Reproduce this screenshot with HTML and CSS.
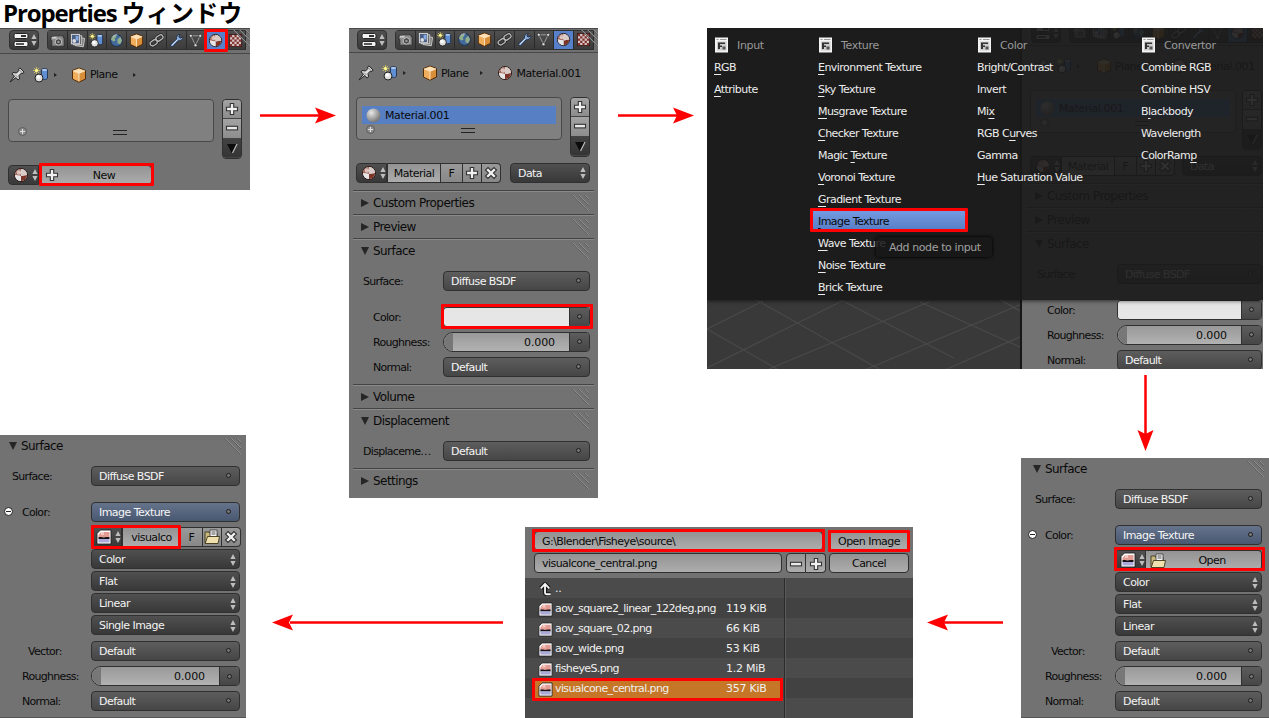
FILE: index.html
```html
<!DOCTYPE html>
<html lang="ja">
<head>
  <meta charset="UTF-8" />
  <title>Properties ウィンドウ</title>
  <link rel="stylesheet" href="styles.css">
</head>
<body>
  <!-- icon set -->
  <svg class="defs" width="0" height="0">
    <defs>
      <radialGradient id="ball" cx="35%" cy="30%" r="75%">
        <stop offset="0" stop-color="#e8e8e8"/><stop offset="1" stop-color="#707070"/>
      </radialGradient>
    </defs>
    <symbol id="i-editor" viewBox="0 0 16 16">
      <rect x="1" y="1.500" width="14" height="5" rx="1.500" fill="#f2f2f2" stroke="#222"/>
      <rect x="8" y="3" width="5" height="2" fill="#333"/>
      <rect x="1" y="9.500" width="14" height="5" rx="1.500" fill="#f2f2f2" stroke="#222"/>
      <rect x="3" y="11" width="8" height="2" fill="#555"/>
    </symbol>
    <symbol id="i-camera" viewBox="0 0 16 16">
      <path d="M1 4h3l1-1h9v2h1v9H2V8H1z" fill="#8d8d8d" stroke="#222" stroke-width=".7"/>
      <path d="M2 4h5v2H2z" fill="#ccc"/>
      <circle cx="9" cy="9.500" r="3.400" fill="#444" stroke="#c8c8c8"/>
      <circle cx="9" cy="9.500" r="1.300" fill="#999"/>
    </symbol>
    <symbol id="i-layers" viewBox="0 0 16 16">
      <rect x="6" y="5" width="9" height="9" fill="#777" stroke="#c8c8c8" transform="rotate(8 10 9)"/>
      <rect x="3.500" y="3" width="9" height="9.500" fill="#666" stroke="#ccc"/>
      <rect x="1.500" y="1.500" width="8.500" height="10" fill="#4a5f86" stroke="#ddd"/>
      <circle cx="4.500" cy="8.500" r="2" fill="#ddd"/><path d="M6 3h3v5H6z" fill="#86a8dc"/>
    </symbol>
    <symbol id="i-scene" viewBox="0 0 16 16">
      <path d="M3.500 0v7M0 3.500h7M1 1l5 5M6 1L1 6" stroke="#d8cf5a" stroke-width=".8"/>
      <circle cx="3.500" cy="3.500" r="1.500" fill="#fff79a"/>
      <path d="M8.500 3c0-2 6-2 6 0v8c0 2-6 2-6 0z" fill="#5f8fd2" stroke="#1b2740" stroke-width=".8"/>
      <ellipse cx="11.500" cy="3" rx="2.600" ry="1" fill="#b7cdf0"/>
      <circle cx="6" cy="11" r="4" fill="#dedede" stroke="#222"/>
      <circle cx="5.300" cy="10" r="1.800" fill="#fff"/>
    </symbol>
    <symbol id="i-world" viewBox="0 0 16 16">
      <circle cx="8" cy="8" r="6.300" fill="#41699b" stroke="#1d2e4a"/>
      <path d="M3 4l4-2 1 2-2 2 1 2-2 1-3-2zM9 7l3-3 2 4-2 4-3-1z" fill="#93ae8a"/>
      <path d="M4 3.500a6 6 0 0 1 5-1.500" stroke="#c8d6e5" fill="none"/>
    </symbol>
    <symbol id="i-cube" viewBox="0 0 16 16">
      <path d="M8 1l6.500 2.500v8.500L8 15.200 1.500 12V3.500z" fill="#d98e3a" stroke="#462300" stroke-width=".9"/>
      <path d="M8 1.500L14 3.800 8 6.200 2 3.800z" fill="#fde0b4"/>
      <path d="M2 4l6 2.300v8.300L2 11.700z" fill="#f0ad5c"/>
      <path d="M8 6.300v8.200M2 3.900l6 2.400 6-2.400" stroke="#fff0d8" stroke-width=".8" fill="none"/>
    </symbol>
    <symbol id="i-link" viewBox="0 0 16 16">
      <g fill="none" stroke="#222" stroke-width="3"><rect x="7" y="2.800" width="8" height="5" rx="2.500" transform="rotate(-35 11 5)"/><rect x="1" y="8" width="8" height="5" rx="2.500" transform="rotate(-35 5 10.500)"/></g>
      <g fill="none" stroke="#bbb" stroke-width="1.400"><rect x="7" y="2.800" width="8" height="5" rx="2.500" transform="rotate(-35 11 5)"/><rect x="1" y="8" width="8" height="5" rx="2.500" transform="rotate(-35 5 10.500)"/></g>
    </symbol>
    <symbol id="i-wrench" viewBox="0 0 16 16">
      <path d="M1.500 13L8 6.500C7.500 4 9 1.500 12 1.500L10.500 4l1.500 1.500L14.800 4c0 3-2.500 4.800-5 4.200L3.500 15z" fill="#86abd9" stroke="#1c2c44" stroke-width=".9"/>
      <path d="M3 13l6-6" stroke="#d6e5f8"/>
    </symbol>
    <symbol id="i-mesh" viewBox="0 0 16 16">
      <path d="M3 3h10L8 13z" fill="none" stroke="#a8a8a8" stroke-width=".9"/>
      <g fill="#ddd" stroke="#222" stroke-width=".7"><circle cx="3" cy="3" r="1.700"/><circle cx="13" cy="3" r="1.700"/><circle cx="8" cy="13" r="1.700"/></g>
    </symbol>
    <symbol id="i-material" viewBox="0 0 16 16">
      <circle cx="8" cy="8" r="6.500" fill="#dcdcdc" stroke="#2a1512"/>
      <path d="M8 2a6 6 0 0 0-6 6l6 1z" fill="#a4675c"/>
      <path d="M8 9l6-1a6 6 0 0 1-6 6z" fill="#7c3429"/>
      <path d="M2 8l6 1v5a6 6 0 0 1-6-6z" fill="#e6e6e6"/>
      <path d="M8 2v7l6-1a6 6 0 0 0-6-6z" fill="#d9cbc7"/>
      <circle cx="6" cy="5.500" r="2.300" fill="#fff" opacity=".6"/>
    </symbol>
    <symbol id="i-texture" viewBox="0 0 16 16">
      <rect x="1.500" y="1.500" width="13" height="13" fill="#d4c6c4" stroke="#3a1614"/>
      <path d="M2 2h2.400v2.400H2zM6.800 2h2.400v2.400H6.800zM11.600 2H14v2.400h-2.400zM4.400 4.400h2.400v2.400H4.400zM9.200 4.400h2.400v2.400H9.200zM2 6.800h2.400v2.400H2zM6.800 6.800h2.400v2.400H6.800zM11.600 6.800H14v2.400h-2.400zM4.400 9.200h2.400v2.400H4.400zM9.200 9.200h2.400v2.400H9.200zM2 11.600h2.400V14H2zM6.800 11.600h2.400V14H6.800zM11.600 11.600H14V14h-2.400z" fill="#84322f"/>
    </symbol>
    <symbol id="i-pin" viewBox="0 0 16 16">
      <path d="M1 15l4.500-6L3 7l1-1.500 3.500.5L10 3.500 9.500 2 11 1l4 4-1 1.500-1.500-.5L10 8.500l.5 3.500L9 13l-2-2.500z" fill="#ddd" stroke="#222" stroke-width="1"/>
      <path d="M6 7.500l2.500 2.500M10.500 3l2.500 2.500" stroke="#777" stroke-width=".8"/>
    </symbol>
    <symbol id="i-plus" viewBox="0 0 16 16">
      <path d="M6.300 2.500h3.400v3.800h3.800v3.400H9.700v3.800H6.300V9.700H2.500V6.300h3.800z" fill="#f0f0f0" stroke="#333" stroke-width="1.100"/>
    </symbol>
    <symbol id="i-minus" viewBox="0 0 16 16">
      <rect x="2.500" y="6.300" width="11" height="3.600" fill="#e8e8e8" stroke="#333" stroke-width="1.100"/>
    </symbol>
    <symbol id="i-close" viewBox="0 0 16 16">
      <path d="M5 2.500l3 3 3-3L13.500 5l-3 3 3 3L11 13.500l-3-3-3 3L2.500 11l3-3-3-3z" fill="#f0f0f0" stroke="#333" stroke-width="1.100"/>
    </symbol>
    <symbol id="i-down" viewBox="0 0 16 16">
      <path d="M3 4h10L8 13.500z" fill="#0c0c0c"/><path d="M13 4L8.500 13" stroke="#bbb" stroke-width="1.300"/>
    </symbol>
    <symbol id="i-updown" viewBox="0 0 8 16">
      <path d="M4 2L6.600 7H1.400zM4 14L6.600 9H1.400z" fill="#bdbdbd"/>
    </symbol>
    <symbol id="i-image" viewBox="0 0 16 16">
      <path d="M4.500 1H15v14H1V4.500z" fill="#fff" stroke="#222" stroke-width=".9"/>
      <path d="M5 3h8.500v5.500h-11V6z" fill="#e39c94"/><path d="M5 3h3v3H5z" fill="#f4c9c2"/>
      <path d="M2.500 8h3l2 .5L10 8h3.500v2h-11z" fill="#191319"/>
      <path d="M2.500 10h11v3.500h-11z" fill="#aaa9d8"/>
    </symbol>
    <symbol id="i-folder" viewBox="0 0 16 16">
      <path d="M1 3h4l1 1.500h7V14H1z" fill="#c9b87e" stroke="#3c351c" stroke-width=".9"/>
      <path d="M6 1h7v8H6z" fill="#f5f5f5" stroke="#333" stroke-width=".8"/>
      <path d="M7.500 3h4M7.500 5h4" stroke="#555"/>
      <path d="M3.500 7.500H15.500L14 14.500H1.200z" fill="#efe0ad" stroke="#3c351c" stroke-width=".9"/>
    </symbol>
    <symbol id="i-node" viewBox="0 0 16 16">
      <rect x="1" y=".5" width="13" height="15" fill="#f3f3f3"/>
      <path d="M2.500 2.500h2M6 2.500h6.500" stroke="#999"/>
      <path d="M3 4.500h9.500v9H3z" fill="#ccc"/>
      <path d="M4 5.500h7v1.500H6v1.500h2v1.500H6V12H4z" fill="#333"/>
      <path d="M8.500 9.500h3V12.500h-3z" fill="#555"/>
    </symbol>
    <symbol id="i-up" viewBox="0 0 16 16">
      <path d="M7.500 2v9.500q0 1.500 1.500 1.500h4.500M3 6.800L7.500 2 12 6.800" fill="none" stroke="#111" stroke-width="4"/>
      <path d="M7.500 2v9.500q0 1.500 1.500 1.500h4.500M3 6.800L7.500 2 12 6.800" fill="none" stroke="#f4f4f4" stroke-width="2"/>
    </symbol>
    <symbol id="i-grip" viewBox="0 0 18 18">
      <path d="M1 1l16 16M7 1l10 10M13 1l4 4" stroke="#8e8e8e" stroke-width="1"/>
      <path d="M0 1l16 16M6 1l11 11M12 1l5 5" stroke="#5a5a5a" stroke-width=".8"/>
    </symbol>
  </svg>

  <div class="board">
    <h1>Properties <span>ウィンドウ</span></h1>

    <!-- step 1: material tab, no material yet -->
    <div class="window step-new">
      <div class="tabbar">
        <div class="btn dark editor"><svg class="icon"><use href="#i-editor"/></svg><svg class="arrows"><use href="#i-updown"/></svg></div>
        <div class="tabs">
          <i><svg class="icon"><use href="#i-camera"/></svg></i><i><svg class="icon"><use href="#i-layers"/></svg></i><i><svg class="icon"><use href="#i-scene"/></svg></i><i><svg class="icon"><use href="#i-world"/></svg></i><i><svg class="icon"><use href="#i-cube"/></svg></i><i><svg class="icon"><use href="#i-link"/></svg></i><i><svg class="icon"><use href="#i-wrench"/></svg></i><i><svg class="icon"><use href="#i-mesh"/></svg></i><i class="active marked"><svg class="icon"><use href="#i-material"/></svg></i><i><svg class="icon"><use href="#i-texture"/></svg></i>
        </div>
        <svg class="grip"><use href="#i-grip"/></svg>
      </div>
      <div class="path">
        <svg class="icon"><use href="#i-pin"/></svg>
        <svg class="icon scene"><use href="#i-scene"/></svg><b></b>
        <svg class="icon cube"><use href="#i-cube"/></svg><span>Plane</span><b class="far"></b>
      </div>
      <div class="slots">
        <div class="list"><em></em><u></u></div>
        <div class="side"><div><svg class="icon"><use href="#i-plus"/></svg></div><div><svg class="icon"><use href="#i-minus"/></svg></div><div class="dark"><svg class="icon"><use href="#i-down"/></svg></div></div>
      </div>
      <div class="datablock">
        <div class="btn dark pick"><svg class="icon"><use href="#i-material"/></svg><svg class="arrows"><use href="#i-updown"/></svg></div>
        <div class="btn light new marked"><svg class="icon"><use href="#i-plus"/></svg><span>New</span></div>
      </div>
    </div>

    <!-- step 2: material settings -->
    <div class="window step-material" id="material">
      <div class="tabbar">
        <div class="btn dark editor"><svg class="icon"><use href="#i-editor"/></svg><svg class="arrows"><use href="#i-updown"/></svg></div>
        <div class="tabs">
          <i><svg class="icon"><use href="#i-camera"/></svg></i><i><svg class="icon"><use href="#i-layers"/></svg></i><i><svg class="icon"><use href="#i-scene"/></svg></i><i><svg class="icon"><use href="#i-world"/></svg></i><i><svg class="icon"><use href="#i-cube"/></svg></i><i><svg class="icon"><use href="#i-link"/></svg></i><i><svg class="icon"><use href="#i-wrench"/></svg></i><i><svg class="icon"><use href="#i-mesh"/></svg></i><i class="active"><svg class="icon"><use href="#i-material"/></svg></i><i><svg class="icon"><use href="#i-texture"/></svg></i>
        </div>
        <svg class="grip"><use href="#i-grip"/></svg>
      </div>
      <div class="path">
        <svg class="icon"><use href="#i-pin"/></svg>
        <svg class="icon scene"><use href="#i-scene"/></svg><b></b>
        <svg class="icon cube"><use href="#i-cube"/></svg><span>Plane</span><b class="mid"></b>
        <svg class="icon mat"><use href="#i-material"/></svg><span>Material.001</span>
      </div>
      <div class="slots">
        <div class="list">
          <div class="slot"><svg class="ball" viewBox="0 0 16 16"><circle cx="8" cy="8" r="7.500" fill="url(#ball)"/></svg>Material.001</div>
          <em></em><u></u>
        </div>
        <div class="side"><div><svg class="icon"><use href="#i-plus"/></svg></div><div><svg class="icon"><use href="#i-minus"/></svg></div><div class="dark"><svg class="icon"><use href="#i-down"/></svg></div></div>
      </div>
      <div class="datablock">
        <div class="btn dark pick"><svg class="icon"><use href="#i-material"/></svg><svg class="arrows"><use href="#i-updown"/></svg></div>
        <div class="btn light name">Material</div>
        <div class="btn mid-grey fake">F</div>
        <div class="btn mid-grey add"><svg class="icon"><use href="#i-plus"/></svg></div>
        <div class="btn mid-grey last"><svg class="icon"><use href="#i-close"/></svg></div>
        <div class="btn dark data"><span>Data</span><svg class="arrows"><use href="#i-updown"/></svg></div>
      </div>

      <div class="section"><div class="head closed">Custom Properties<svg class="grip"><use href="#i-grip"/></svg></div></div>
      <div class="section"><div class="head closed">Preview<svg class="grip"><use href="#i-grip"/></svg></div></div>
      <div class="section">
        <div class="head">Surface<svg class="grip"><use href="#i-grip"/></svg></div>
        <div class="props">
          <div class="row"><label>Surface:</label><div class="btn link">Diffuse BSDF</div></div>
          <div class="row gap"><label class="in">Color:</label><div class="swatch marked"><div></div><s></s></div></div>
          <div class="row"><label class="in">Roughness:</label><div class="slider"><div>0.000</div><s></s></div></div>
          <div class="row"><label class="in">Normal:</label><div class="btn link">Default</div></div>
        </div>
      </div>
      <div class="section"><div class="head closed">Volume<svg class="grip"><use href="#i-grip"/></svg></div></div>
      <div class="section">
        <div class="head">Displacement<svg class="grip"><use href="#i-grip"/></svg></div>
        <div class="props"><div class="row"><label>Displaceme…</label><div class="btn link">Default</div></div></div>
      </div>
      <div class="section"><div class="head closed">Settings<svg class="grip"><use href="#i-grip"/></svg></div></div>
    </div>

    <!-- step 3: node menu over the 3D view -->
    <div class="window step-menu">
      <svg class="floor" viewBox="0 0 315 71" width="315" height="71">
        <path d="M0 31L56 3M0 70L135 3M62 71L222 4M160 71L315 6M240 71L315 38M0 31L70 71M46 0L172 71M130 0L247 60M213 4L315 50M290 0l25 14" stroke="#494949" stroke-width="1.200" fill="none"/>
      </svg>
      <div class="behind" id="behind"></div>
      <div class="menu">
        <div class="col">
          <h2><svg class="icon"><use href="#i-node"/></svg>Input</h2>
          <p><u>R</u>GB</p><p><u>A</u>ttribute</p>
        </div>
        <div class="col">
          <h2><svg class="icon"><use href="#i-node"/></svg>Texture</h2>
          <p><u>E</u>nvironment Texture</p><p><u>S</u>ky Texture</p><p><u>M</u>usgrave Texture</p><p><u>C</u>hecker Texture</p><p>Magic <u>T</u>exture</p><p><u>V</u>oronoi Texture</p><p><u>G</u>radient Texture</p><p class="hover marked"><u>I</u>mage Texture</p><p><u>W</u>ave Texture</p><p><u>N</u>oise Texture</p><p><u>B</u>rick Texture</p>
        </div>
        <div class="col">
          <h2><svg class="icon"><use href="#i-node"/></svg>Color</h2>
          <p>Bright/C<u>o</u>ntrast</p><p>Invert</p><p>Mi<u>x</u></p><p>RGB C<u>u</u>rves</p><p>Gamma</p><p><u>H</u>ue Saturation Value</p>
        </div>
        <div class="col">
          <h2><svg class="icon"><use href="#i-node"/></svg>Convertor</h2>
          <p>Combine RGB</p><p>Combine HSV</p><p>B<u>l</u>ackbody</p><p>Wavelength</p><p>ColorRam<u>p</u></p>
        </div>
      </div>
      <div class="tooltip">Add node to input</div>
    </div>

    <!-- step 4: image texture, open a file -->
    <div class="window step-open">
      <div class="head">Surface<svg class="grip"><use href="#i-grip"/></svg></div>
      <div class="props">
        <div class="row"><label>Surface:</label><div class="btn link">Diffuse BSDF</div></div>
        <div class="row gap"><label class="in fold">Color:</label><div class="btn link blue">Image Texture</div></div>
        <div class="row"><label></label>
          <div class="group marked">
            <div class="btn dark pick"><svg class="icon"><use href="#i-image"/></svg><svg class="arrows"><use href="#i-updown"/></svg></div>
            <div class="btn light open"><svg class="icon"><use href="#i-folder"/></svg><span>Open</span></div>
          </div>
        </div>
        <div class="row tight"><label></label><div class="btn dark enum"><span>Color</span><svg class="arrows"><use href="#i-updown"/></svg></div></div>
        <div class="row tight"><label></label><div class="btn dark enum"><span>Flat</span><svg class="arrows"><use href="#i-updown"/></svg></div></div>
        <div class="row tight"><label></label><div class="btn dark enum"><span>Linear</span><svg class="arrows"><use href="#i-updown"/></svg></div></div>
        <div class="row"><label class="deep">Vector:</label><div class="btn link">Default</div></div>
        <div class="row"><label class="in">Roughness:</label><div class="slider"><div>0.000</div><s></s></div></div>
        <div class="row"><label class="in">Normal:</label><div class="btn link">Default</div></div>
      </div>
    </div>

    <!-- step 5: file browser -->
    <div class="window step-files">
      <div class="bar">
        <div class="btn light field path-field marked">G:\Blender\Fisheye\source\</div>
        <div class="btn light action marked">Open Image</div>
      </div>
      <div class="bar second">
        <div class="btn light field file-field">visualcone_central.png</div>
        <div class="btn light step minus"><svg class="icon"><use href="#i-minus"/></svg></div><div class="btn light step plus"><svg class="icon"><use href="#i-plus"/></svg></div>
        <div class="btn light action">Cancel</div>
      </div>
      <div class="files">
        <div class="file"><svg class="icon"><use href="#i-up"/></svg><span>..</span></div>
        <div class="file"><svg class="icon"><use href="#i-image"/></svg><span>aov_square2_linear_122deg.png</span><span>119 KiB</span></div>
        <div class="file"><svg class="icon"><use href="#i-image"/></svg><span>aov_square_02.png</span><span>66 KiB</span></div>
        <div class="file"><svg class="icon"><use href="#i-image"/></svg><span>aov_wide.png</span><span>53 KiB</span></div>
        <div class="file"><svg class="icon"><use href="#i-image"/></svg><span>fisheyeS.png</span><span>1.2 MiB</span></div>
        <div class="file selected marked"><svg class="icon"><use href="#i-image"/></svg><span>visualcone_central.png</span><span>357 KiB</span></div>
      </div>
    </div>

    <!-- step 6: image loaded -->
    <div class="window step-loaded">
      <div class="head">Surface<svg class="grip"><use href="#i-grip"/></svg></div>
      <div class="props">
        <div class="row"><label>Surface:</label><div class="btn link">Diffuse BSDF</div></div>
        <div class="row gap"><label class="in fold">Color:</label><div class="btn link blue">Image Texture</div></div>
        <div class="row"><label></label>
          <div class="group short marked">
            <div class="btn dark pick"><svg class="icon"><use href="#i-image"/></svg><svg class="arrows"><use href="#i-updown"/></svg></div>
            <div class="btn light img-name">visualco</div>
          </div>
          <div class="btn mid-grey fake">F</div>
          <div class="btn mid-grey add"><svg class="icon"><use href="#i-folder"/></svg></div>
          <div class="btn mid-grey last"><svg class="icon"><use href="#i-close"/></svg></div>
        </div>
        <div class="row tight"><label></label><div class="btn dark enum"><span>Color</span><svg class="arrows"><use href="#i-updown"/></svg></div></div>
        <div class="row tight"><label></label><div class="btn dark enum"><span>Flat</span><svg class="arrows"><use href="#i-updown"/></svg></div></div>
        <div class="row tight"><label></label><div class="btn dark enum"><span>Linear</span><svg class="arrows"><use href="#i-updown"/></svg></div></div>
        <div class="row tight"><label></label><div class="btn dark enum"><span>Single Image</span><svg class="arrows"><use href="#i-updown"/></svg></div></div>
        <div class="row vector"><label class="deep">Vector:</label><div class="btn link">Default</div></div>
        <div class="row"><label class="in">Roughness:</label><div class="slider"><div>0.000</div><s></s></div></div>
        <div class="row"><label class="in">Normal:</label><div class="btn link">Default</div></div>
      </div>
    </div>

    <!-- arrows between the steps -->
    <svg class="flow" width="1269" height="718" viewBox="0 0 1269 718">
      <path d="M260 115.500H320M618 115.500H678M1145.500 375V434M1003 622.500H944M503 622.500H290" stroke="#f00" stroke-width="2.500"/>
      <path d="M336 115.500l-21-8 4 8-4 8zM694 115.500l-21-8 4 8-4 8zM1145.500 451l-8-21 8 4 8-4zM927 622.500l21-8-4 8 4 8zM272 622.500l21-8-4 8 4 8z" fill="#f00"/>
    </svg>
  </div>

  <script>
    // the properties editor is also visible behind the node menu
    const copy = document.getElementById("material").cloneNode(true);
    copy.removeAttribute("id");
    copy.className = "editor-copy";
    copy.querySelectorAll(".marked").forEach(el => el.classList.remove("marked"));
    document.getElementById("behind").appendChild(copy);
  </script>
</body>
</html>
```
FILE: styles.css
```css
:root {
  --panel: #727272;
  --line: #303030;
  --red: #fe0000;
  --label: 94px;
}

*,
*::before,
*::after {
  box-sizing: border-box;
}

body {
  margin: 0;
  background: #fff;
  color: #0a0a0a;
  font-family: "DejaVu Sans", sans-serif;
  font-size: 11px;
  letter-spacing: -0.55px;
  overflow: hidden;
}

.defs {
  position: absolute;
}

.board {
  position: relative;
  width: 1269px;
  height: 718px;
  overflow: hidden;
}

h1 {
  margin: 0;
  padding-left: 3px;
  color: #000;
  font: bold 24px/24px "Open Sans", "Noto Sans CJK JP", sans-serif;
  letter-spacing: -1.15px;
  white-space: nowrap;
}

h1 span {
  font-family: "Noto Sans CJK JP", sans-serif;
  font-size: 24px;
  letter-spacing: 0.2px;
}

.window {
  position: absolute;
  background: var(--panel);
  overflow: hidden;
  white-space: nowrap;
}

.step-new { left: 0; top: 28px; width: 250px; height: 162px; }
.step-material { left: 349px; top: 28px; width: 249px; height: 470px; }
.step-menu { left: 707px; top: 28px; width: 556px; height: 341px; background: #393939; }
.step-open { left: 1021px; top: 458px; width: 248px; height: 260px; }
.step-files { left: 525px; top: 527px; width: 388px; height: 191px; }
.step-loaded { left: 0; top: 435px; width: 246px; height: 283px; --label: 91px; }

.step-open,
.step-loaded {
  border-bottom: 1px solid #555;
}

/* red frame around the control to click */
.marked {
  position: relative;
  z-index: 2;
}

.marked::after {
  content: "";
  position: absolute;
  inset: -3px;
  border: 3px solid var(--red);
  border-radius: 1px;
}

.icon {
  width: 16px;
  height: 16px;
  flex: none;
}

.arrows {
  width: 8px;
  height: 16px;
  flex: none;
}

/* buttons */
.btn {
  height: 20px;
  display: flex;
  align-items: center;
  border: 1px solid var(--line);
  border-radius: 4px;
  flex: none;
}

.dark {
  background: linear-gradient(#505050, #383838);
  color: #f2f2f2;
}

.light {
  background: linear-gradient(#939393, #adadad);
}

.mid-grey {
  background: linear-gradient(#999, #888);
}

.link {
  position: relative;
  flex: 1;
  padding-left: 7px;
  padding-top: 1px;
  background: linear-gradient(#5d5d5d, #464646);
  color: #f5f5f5;
}

.link::after,
s::after {
  content: "";
  width: 5px;
  height: 5px;
  border: 1px solid #1c1c1c;
  border-radius: 50%;
  background: #777;
}

.link::after {
  margin-left: auto;
  margin-right: 8px;
  margin-bottom: 2px;
}

.blue {
  background: linear-gradient(#65738b, #495871);
}

.pick {
  width: 31px;
  padding-left: 4px;
  gap: 2px;
  border-radius: 4px 0 0 4px;
}

/* editor header */
.tabbar {
  height: 26px;
  display: flex;
  align-items: center;
  padding: 0 0 2px 9px;
  border-top: 1px solid #4a4a4a;
  border-bottom: 1px solid #484848;
  background: #707070;
  position: relative;
}

.editor {
  width: 30px;
  padding-left: 3px;
  gap: 1px;
}

.tabs {
  display: flex;
  margin-left: 8px;
  border: 1px solid var(--line);
  border-right: 0;
  border-radius: 4px 0 0 4px;
}

.tabs i {
  width: 19.8px;
  height: 18px;
  display: flex;
  align-items: center;
  justify-content: center;
  flex: none;
  background: linear-gradient(#505050, #3b3b3b);
  border-right: 1px solid #2a2a2a;
}

.tabs .icon {
  width: 15px;
  height: 15px;
}

.tabs i.active {
  background: #5680c9;
}

.tabs .marked::after {
  inset: -2px -3px -3px -2px;
}

.tabbar .grip {
  position: absolute;
  right: -5px;
  top: 0;
}

.step-material .tabbar {
  height: 25px;
  padding-left: 8px;
}

/* breadcrumb */
.path {
  height: 41px;
  display: flex;
  align-items: center;
  padding-left: 9px;
}

.path .scene { margin-left: 8px; }
.path .cube { margin-left: 16px; }
.path .mat { margin-left: 14px; }
.path span { margin-left: 3px; }

.step-new .path .cube {
  margin-left: 14px;
}

.path b {
  margin-left: 5px;
  border: 2.5px solid transparent;
  border-left: 3px solid #222;
  border-right: 0;
}

.path .far { margin-left: 16px; }
.path .mid { margin-left: 12px; }

.path span:last-child {
  letter-spacing: -0.4px;
}

.step-material .path {
  height: 40px;
}

/* material slots */
.slots {
  display: flex;
  padding: 4px 8px 0;
  justify-content: space-between;
}

.list {
  width: 206px;
  height: 43px;
  position: relative;
  border: 1px solid #494949;
  border-radius: 4px;
  background: #808080;
}

.list em {
  position: absolute;
  left: 9px;
  bottom: 5px;
  width: 9px;
  height: 9px;
  border: 1px solid #5c5c5c;
  border-radius: 50%;
  background: linear-gradient(#ddd, #ddd) center / 5px 1px no-repeat,
    linear-gradient(#ddd, #ddd) center / 1px 5px no-repeat,
    #8d8d8d;
}

.list u {
  position: absolute;
  left: 104px;
  bottom: 6px;
  width: 14px;
  height: 5px;
  border: 1px solid #222;
  border-width: 1px 0;
}

.slot {
  display: flex;
  align-items: center;
  gap: 4px;
  height: 18px;
  margin: 8px 5px;
  padding: 1px 0 0 4px;
  background: #567fc4;
  letter-spacing: -0.4px;
}

.ball {
  width: 15px;
  height: 15px;
  margin-top: -1px;
}

.side {
  width: 20px;
  border: 1px solid var(--line);
  border-radius: 4px;
  overflow: hidden;
}

.side div {
  height: 19.300px;
  display: flex;
  align-items: center;
  justify-content: center;
  background: linear-gradient(#a3a3a3, #8d8d8d);
  border-bottom: 1px solid #444;
}

.side .dark {
  background: linear-gradient(#424242, #353535);
}

.datablock {
  display: flex;
  padding: 6px 8px 0;
}

.datablock .btn {
  padding-top: 1px;
}

.new {
  width: 111px;
  margin-left: 2px;
  padding-left: 2px;
  border-radius: 0 4px 4px 0;
}

.new::after {
  inset: -3px -3px -2px;
}

.new span,
.open span {
  flex: 1;
  text-align: center;
  padding-right: 3px;
}

.name {
  width: 54px;
  justify-content: center;
  border-radius: 0;
}

.fake {
  width: 22px;
  justify-content: center;
  border-radius: 0;
  border-left: 0;
}

.add,
.last {
  width: 19px;
  justify-content: center;
  border-left: 0;
  border-radius: 0;
}

.last {
  border-radius: 0 4px 4px 0;
}

.data {
  width: 80px;
  margin-left: auto;
}

.data,
.enum {
  padding: 1px 2px 0 7px;
  justify-content: space-between;
}

.enum {
  flex: 1;
}

.step-material .slots,
.step-material .datablock {
  padding-left: 7px;
}

/* collapsible sections */
.section {
  margin: 0 4px;
  border-top: 1px solid #434343;
  box-shadow: inset 0 1px #8a8a8a;
}

.datablock + .section {
  margin-top: 7px;
}

.head {
  height: 23px;
  display: flex;
  align-items: center;
  font-size: 12px;
  padding: 1px 0 0 8px;
  letter-spacing: -0.55px;
}

.head::before {
  content: "";
  width: 0;
  height: 0;
  margin-right: 4px;
  border: 4px solid transparent;
  border-top: 8px solid #262626;
  border-bottom: 0;
}

.head.closed::before {
  border: 4px solid transparent;
  border-left: 8px solid #262626;
  border-right: 0;
}

.grip {
  width: 18px;
  height: 18px;
  margin-left: auto;
  margin-right: 4px;
}

.step-open .head,
.step-loaded .head {
  height: 22px;
  padding: 0 0 0 12px;
}

.step-loaded .head {
  padding-left: 9px;
}

/* property rows */
.props {
  padding: 9px 7px 7px 0;
}

.section .props {
  padding-right: 4px;
  margin-left: -4px;
}

.row {
  display: flex;
  align-items: center;
  margin-top: 5px;
}

.row:first-child { margin-top: 0; }
.row.gap { margin-top: 16px; }
.row.tight { margin-top: 2px; }
.row.vector { margin-top: 6px; }

label {
  position: relative;
  width: var(--label);
  flex: none;
  padding-top: 1px;
  padding-left: calc(var(--label) - 80px);
  letter-spacing: -0.7px;
}

label.in { padding-left: calc(var(--label) - 70px); }
label.deep { padding-left: calc(var(--label) - 64px); }

.step-loaded label {
  padding-left: 12px;
}

.step-loaded label.in { padding-left: 22px; }
.step-loaded label.deep { padding-left: 28px; }

.step-loaded .props {
  padding-right: 6px;
}

.fold::before {
  content: "";
  position: absolute;
  left: calc(var(--label) - 87px);
  top: 2px;
  width: 9px;
  height: 9px;
  border: 1px solid #222;
  border-radius: 50%;
  background: linear-gradient(#222, #222) center / 5px 1px no-repeat, #fff;
}

.swatch,
.slider {
  flex: 1;
  display: flex;
  height: 20px;
  border: 1px solid var(--line);
  border-radius: 4px;
}

.swatch.marked::after {
  inset: -4px -4px -3px -3px;
}

.swatch div {
  flex: 1;
  background: #e6e6e6;
  border-radius: 3px 0 0 3px;
}

.slider {
  border-radius: 10px 4px 4px 10px;
  overflow: hidden;
}

.slider div {
  flex: 1;
  display: flex;
  align-items: center;
  justify-content: flex-end;
  padding: 1px 14px 0 0;
  background: linear-gradient(90deg, #777 9px, transparent 9px), linear-gradient(#999, #b2b2b2);
  letter-spacing: -0.1px;
}

s {
  width: 20px;
  display: flex;
  align-items: center;
  justify-content: center;
  background: linear-gradient(#5d5d5d, #464646);
  border-left: 1px solid var(--line);
}

.group {
  flex: 1;
  display: flex;
  height: 20px;
}

.group.marked::after {
  inset: -3px -3px -1px -1px;
}

.group.short {
  flex: none;
  width: 90px;
}

.group.short.marked::after {
  inset: -2px 0 -2px 0;
}

.open {
  flex: 1;
  border-radius: 0 4px 4px 0;
  border-left: 0;
  padding: 1px 0 0 4px;
}

.img-name {
  flex: 1;
  justify-content: center;
  border-radius: 0;
}

.row .img-name,
.row .fake {
  padding-top: 1px;
}

/* node menu */
.floor {
  position: absolute;
  left: 0;
  bottom: 0;
}

.behind {
  position: absolute;
  left: 313px;
  top: -7px;
  width: 250px;
  border-left: 2px solid #161616;
  background: var(--panel);
}

.editor-copy {
  margin-left: 1px;
}

.editor-copy .tabbar {
  height: 25px;
  padding-left: 8px;
}

.editor-copy .path {
  height: 40px;
}

.editor-copy .slots,
.editor-copy .datablock {
  padding-left: 7px;
}

.menu {
  position: relative;
  height: 272px;
  display: grid;
  grid-template-columns: 104px 159px 164px 1fr;
  padding: 6px 0 0 7px;
  background: rgba(25, 25, 25, 0.9);
  box-shadow: 0 1px 4px rgba(0, 0, 0, 0.6);
  color: #ededed;
}

.menu h2 {
  height: 22px;
  margin: 0;
  display: flex;
  align-items: center;
  gap: 7px;
  color: #999;
  font-size: 11px;
  font-weight: normal;
  letter-spacing: -0.35px;
}

.menu h2 .icon {
  margin-top: -1px;
}

.menu p {
  width: 154px;
  height: 22px;
  line-height: 24px;
  margin: 0 0 0 -5px;
  padding-left: 5px;
}

.menu u {
  text-underline-offset: 3px;
}

.menu .hover {
  height: 20px;
  line-height: 22px;
  margin-top: 1px;
  margin-bottom: 1px;
  background: linear-gradient(#749be2, #547cc4);
  color: #0a0a0a;
}

.hover.marked::after {
  inset: -3px -1px -1px -3px;
}

.tooltip {
  position: absolute;
  left: 169px;
  top: 209px;
  width: 116px;
  height: 20px;
  line-height: 21px;
  padding-left: 13px;
  border-radius: 4px;
  background: rgba(24, 24, 24, 0.88);
  box-shadow: 0 0 3px 1px #090909;
  color: #a0a0a0;
  letter-spacing: -0.7px;
  letter-spacing: -0.4px;
}

/* file browser */
.bar {
  display: flex;
  padding: 4px 4px 0 9px;
}

.bar.second {
  padding-top: 2px;
}

.bar .btn {
  padding-top: 1px;
}

.field {
  padding-left: 7px;
}

.path-field {
  width: 289px;
}

.path-field::after {
  inset: -3px -3px -2px;
}

.file-field {
  width: 248px;
}

.action {
  width: 80px;
  margin-left: auto;
  justify-content: center;
}

.action.marked::after {
  inset: -2px;
}

.step {
  width: 20px;
  justify-content: center;
}

.step.minus {
  margin-left: 4px;
  border-radius: 4px 0 0 4px;
}

.step.plus {
  border-left: 0;
  border-radius: 0 4px 4px 0;
}

.files {
  height: 140px;
  margin-top: 5px;
  background: linear-gradient(90deg, transparent 259px, #2c2c2c 259px, #2c2c2c 260px, #5a5a5a 260px, #5a5a5a 261px, transparent 261px),
    repeating-linear-gradient(#4b4b4b 0 20px, #424242 20px 40px);
}

.file {
  width: 250px;
  height: 20px;
  margin-left: 9px;
  padding: 0 0 0 4px;
  display: grid;
  grid-template-columns: 17px 171px 1fr;
  align-items: center;
  color: #f0f0f0;
  letter-spacing: -0.6px;
}

.file .icon {
  width: 15px;
  height: 15px;
  position: relative;
  top: 1px;
}

.file.selected {
  width: 251px;
  height: 23px;
  margin-left: 7px;
  padding: 0 0 2px 6px;
  background: #c57626;
}

.file.selected::after {
  inset: 0;
}

.file.selected .icon {
  z-index: 3;
}

.file span:last-of-type {
  letter-spacing: -0.25px;
}

.flow {
  position: absolute;
  left: 0;
  top: 0;
}
```
